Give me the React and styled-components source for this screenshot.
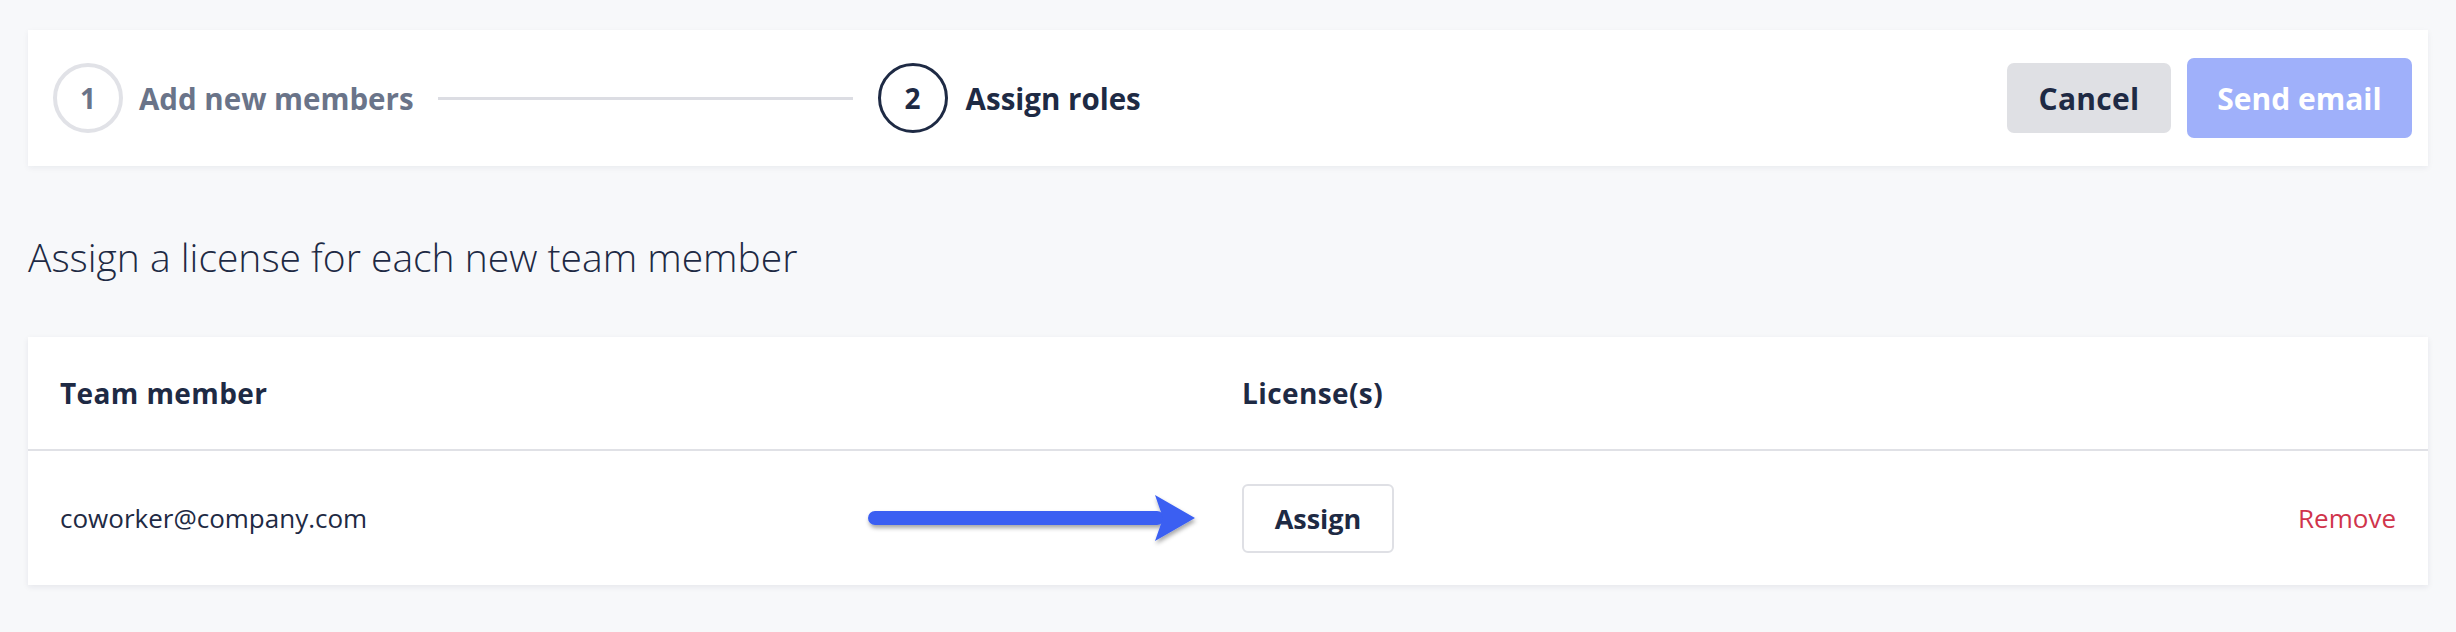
import React from 'react';
import styled, { createGlobalStyle } from 'styled-components';

const navy = '#1e2a44';
const slate = '#6a7489';
const line = '#e0e1e6';

const GlobalStyle = createGlobalStyle`
  html, body {
    margin: 0;
    padding: 0;
    background: #f7f8fa;
    font-family: "Open Sans", Lato, sans-serif;
    color: ${navy};
  }
`;

const Page = styled.div`
  padding: 30px 28px 28px;
`;

const Toolbar = styled.div`
  display: flex;
  align-items: center;
  height: 136px;
  padding: 0 16px 0 25px;
  background: #fff;
  box-shadow: 0 2px 6px rgba(20, 30, 60, 0.06);
`;

const Step = styled.div`
  display: flex;
  align-items: center;
  gap: ${p => (p.$active ? '18px' : '16px')};
`;

const StepCircle = styled.div`
  width: 70px;
  height: 70px;
  box-sizing: border-box;
  border-radius: 50%;
  border: ${p => (p.$active ? `3px solid ${navy}` : '4px solid #e1e2e7')};
  display: flex;
  align-items: center;
  justify-content: center;
  font-size: 28px;
  font-weight: 700;
  color: ${p => (p.$active ? navy : slate)};
`;

const StepLabel = styled.span`
  font-size: 29.5px;
  font-weight: 700;
  color: ${p => (p.$active ? navy : slate)};
`;

const Connector = styled.div`
  flex: 0 0 415px;
  height: 3px;
  background: #dcdde3;
  margin: 0 25px 0 24px;
`;

const Actions = styled.div`
  margin-left: auto;
  display: flex;
  align-items: center;
  gap: 16px;
`;

const Button = styled.button`
  font-family: inherit;
  font-size: 30px;
  font-weight: 700;
  border: none;
  border-radius: 7px;
  cursor: pointer;
`;

const CancelButton = styled(Button)`
  width: 164px;
  height: 70px;
  background: #dfe0e4;
  color: ${navy};
  letter-spacing: 0.3px;
`;

const SendButton = styled(Button)`
  width: 225px;
  height: 80px;
  background: #9fb0fa;
  color: #fff;
`;

const Heading = styled.h2`
  margin: 68px 0 57px;
  font-size: 39px;
  font-weight: 300;
  line-height: 46px;
  color: ${navy};
`;

const Table = styled.div`
  background: #fff;
  box-shadow: 0 2px 6px rgba(20, 30, 60, 0.08);
`;

const Row = styled.div`
  display: grid;
  grid-template-columns: 1182px 1fr auto;
  align-items: center;
  padding: 0 32px;
  height: ${p => (p.$head ? '112px' : '134px')};
  border-bottom: ${p => (p.$head ? `2px solid ${line}` : 'none')};
`;

const HeadCell = styled.div`
  font-size: 28px;
  font-weight: 700;
  letter-spacing: 0.4px;
  color: ${navy};
`;

const EmailCell = styled.div`
  display: flex;
  align-items: center;
  justify-content: space-between;
  padding-right: 42px;
  font-size: 26px;
  color: ${navy};
`;

const AssignButton = styled.button`
  justify-self: start;
  width: 152px;
  height: 69px;
  font-family: inherit;
  font-size: 27px;
  font-weight: 700;
  color: ${navy};
  background: #fff;
  border: 2px solid #dfe0e5;
  border-radius: 6px;
`;

const RemoveLink = styled.a`
  font-size: 26px;
  color: #d0344b;
  cursor: pointer;
`;

const Arrow = () => (
  <svg width="332" height="52" viewBox="0 0 332 52" style={{ overflow: 'visible' }}>
    <defs>
      <filter id="arrowShadow" x="-10%" y="-40%" width="120%" height="180%">
        <feDropShadow dx="1" dy="3" stdDeviation="2" floodColor="#000" floodOpacity="0.35" />
      </filter>
    </defs>
    <g filter="url(#arrowShadow)">
      <rect x="0" y="19" width="296" height="14" rx="7" fill="#3a5ff2" />
      <path d="M287 3 L327 26 L287 49 L295 26 Z" fill="#3a5ff2" />
    </g>
  </svg>
);

export default function App() {
  return (
    <>
      <GlobalStyle />
      <Page>
        <Toolbar>
          <Step>
            <StepCircle>1</StepCircle>
            <StepLabel>Add new members</StepLabel>
          </Step>
          <Connector />
          <Step $active>
            <StepCircle $active>2</StepCircle>
            <StepLabel $active>Assign roles</StepLabel>
          </Step>
          <Actions>
            <CancelButton>Cancel</CancelButton>
            <SendButton>Send email</SendButton>
          </Actions>
        </Toolbar>

        <Heading>Assign a license for each new team member</Heading>

        <Table>
          <Row $head>
            <HeadCell>Team member</HeadCell>
            <HeadCell>License(s)</HeadCell>
            <span />
          </Row>
          <Row>
            <EmailCell>
              coworker@company.com
              <Arrow />
            </EmailCell>
            <AssignButton>Assign</AssignButton>
            <RemoveLink>Remove</RemoveLink>
          </Row>
        </Table>
      </Page>
    </>
  );
}
